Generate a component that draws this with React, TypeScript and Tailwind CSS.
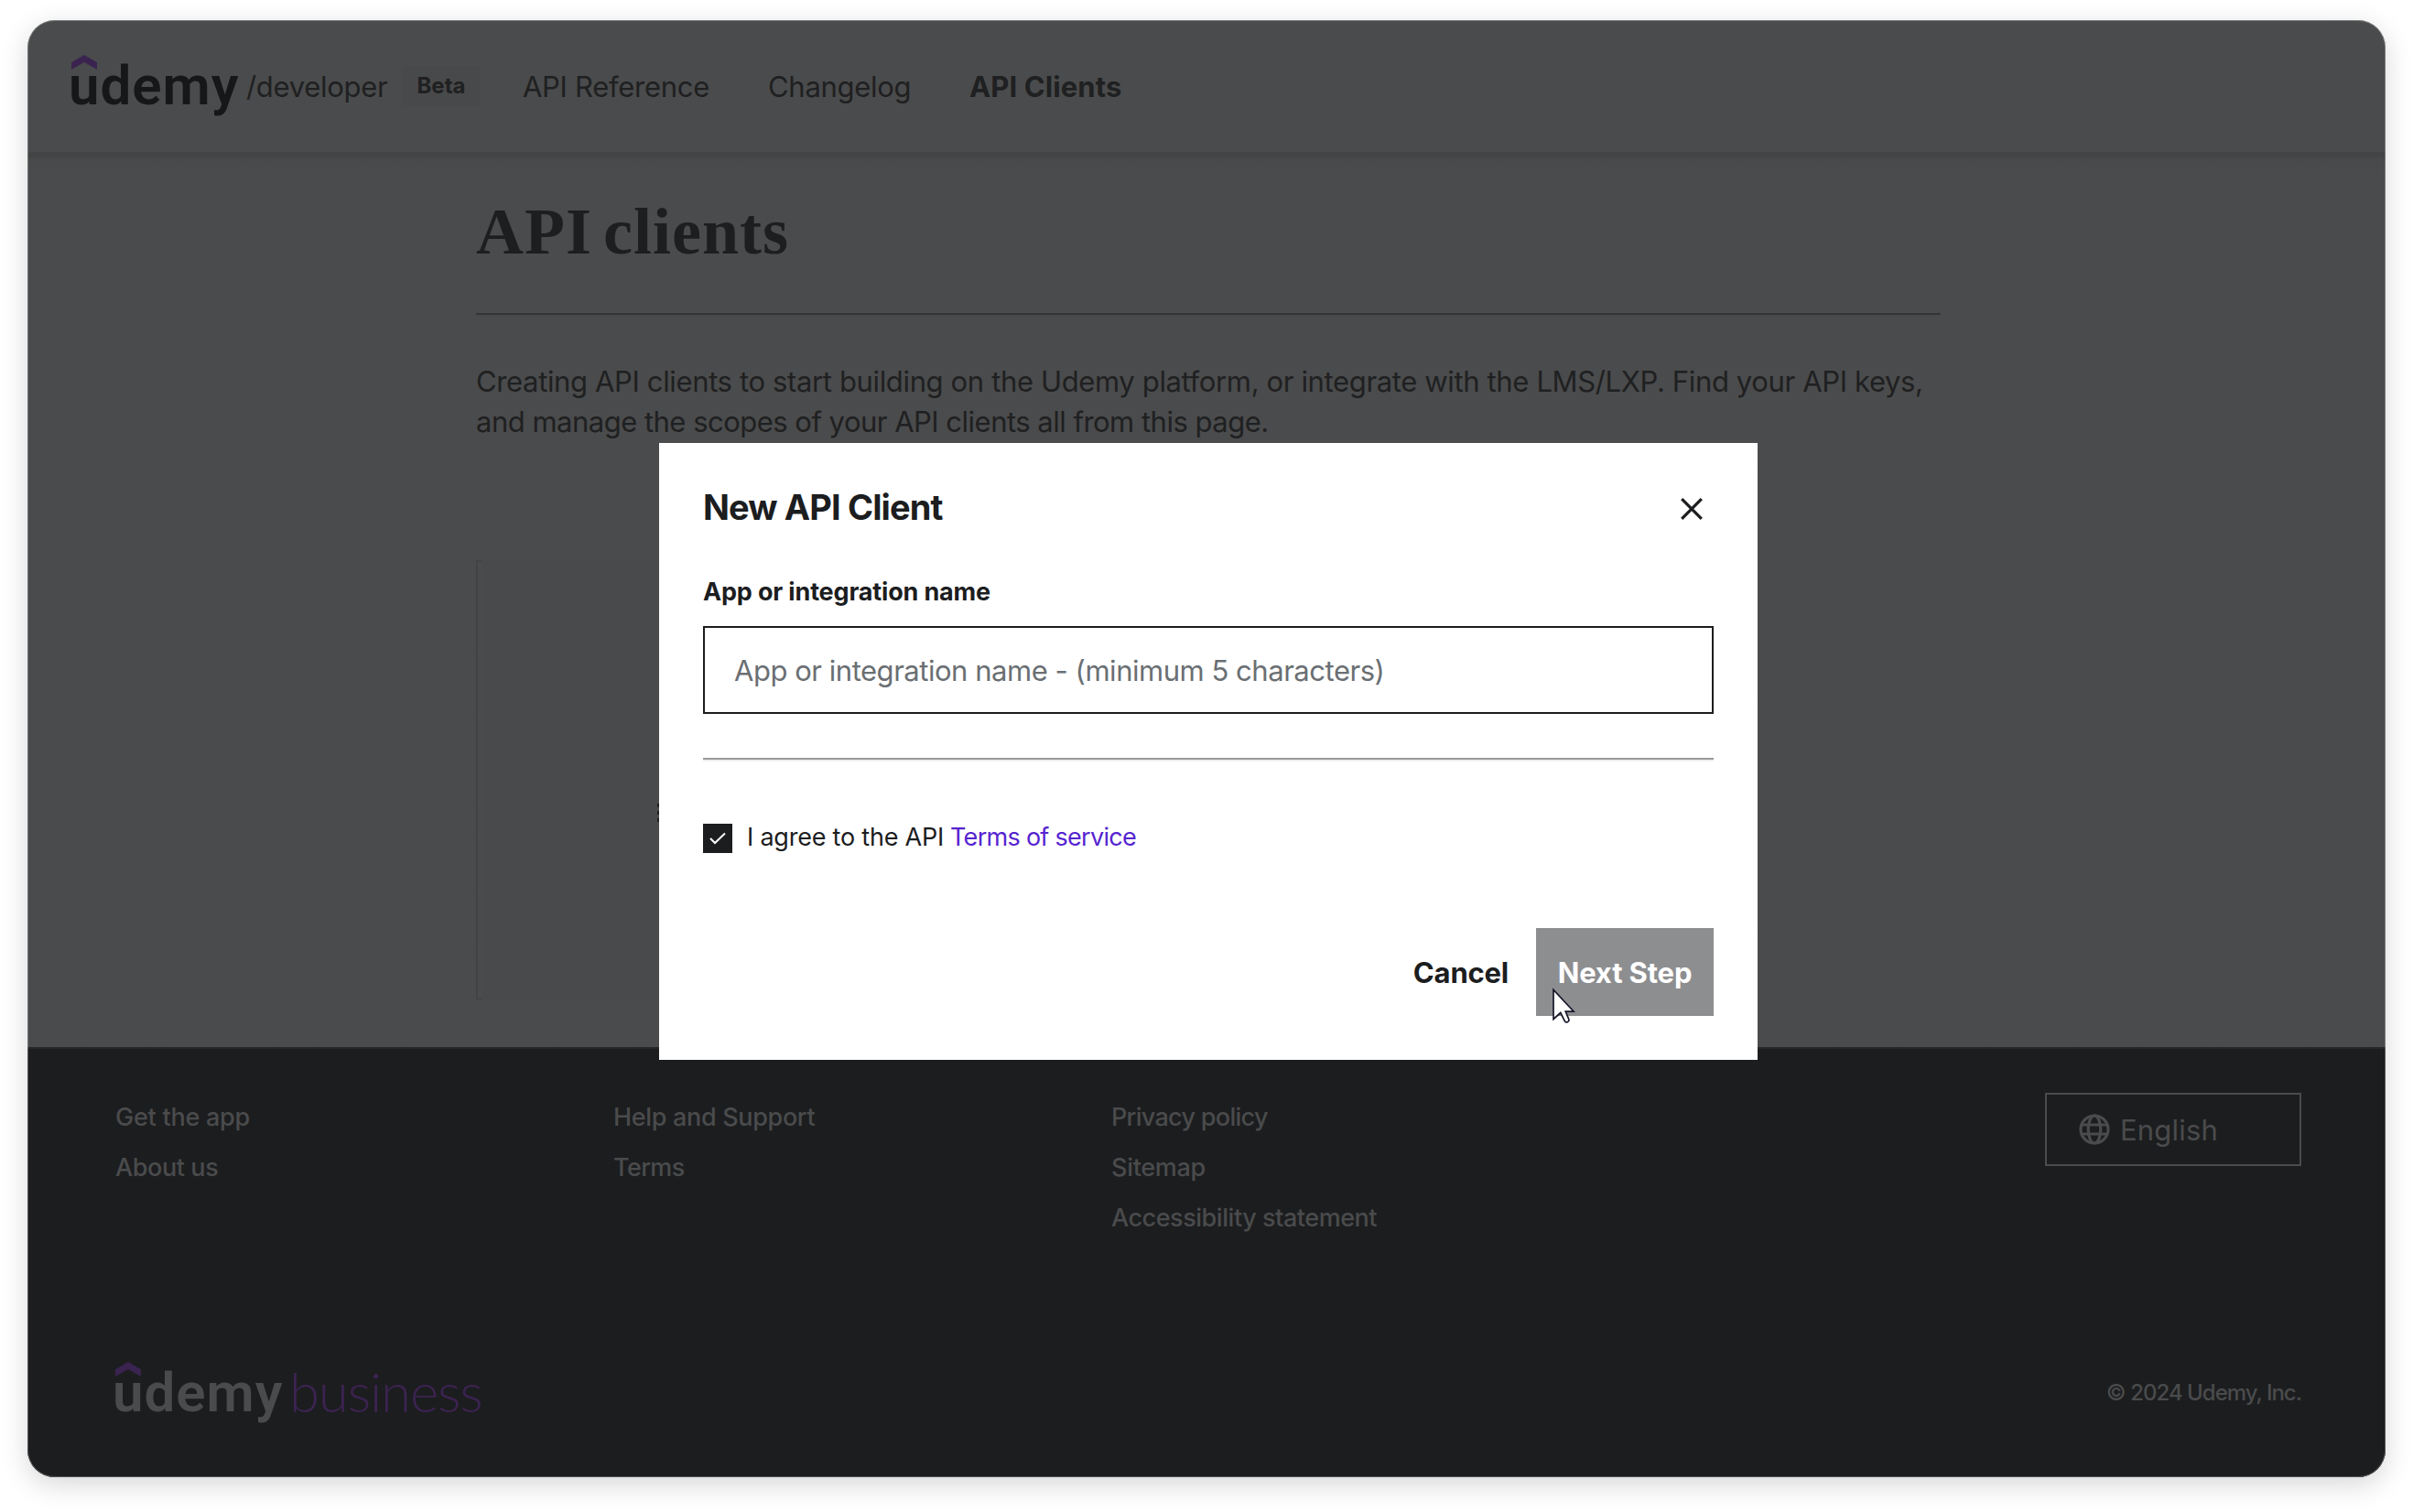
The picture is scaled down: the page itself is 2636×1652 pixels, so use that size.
import React from 'react';

function Caret() {
  return (
    <svg className="absolute left-[3px] top-[-4px]" width="28" height="17" viewBox="0 0 28 17" aria-hidden="true">
      <path d="M0 8.3 14 0l14 8.3V16L14 8 0 16Z" fill="#3b2350" />
    </svg>
  );
}

function Wordmark({ className }: { className: string }) {
  return (
    <div className={`relative w-[186px] shrink-0 font-['Roboto',sans-serif] text-[60px] leading-[60px] font-semibold tracking-[1px] ${className}`}>
      <Caret />
      udemy
    </div>
  );
}

function Header() {
  return (
    <header className="flex h-[144px] shrink-0 items-center pl-[45px] text-[31px] leading-[44px] text-[#1f2021]">
      <Wordmark className="text-[#161718]" />
      <span className="ml-[8px] w-[171px] pt-[2px] tracking-[-0.3px]">/developer</span>
      <span className="flex h-[44px] w-[84px] items-center justify-center bg-[#48494a] text-[24px] leading-[28px] font-bold">
        Beta
      </span>
      <nav className="ml-[47px] flex items-center pt-[2px]">
        <a className="w-[268px] tracking-[-0.29px]">API Reference</a>
        <a className="w-[220px] tracking-[-0.3px]">Changelog</a>
        <a className="font-bold tracking-[0.11px]">API Clients</a>
      </nav>
    </header>
  );
}

function Main() {
  return (
    <main className="h-[978px] shrink-0 bg-linear-to-b from-[#434445] from-[5px] via-[#48494a] via-[8px] to-[#4a4b4c] to-[24px] text-[#1f2021]">
      <div className="mx-[490px] w-[1600px] pt-[47px]">
        <h1 className="font-['Liberation_Serif',serif] text-[72px] leading-[80px] font-bold tracking-[1px] [word-spacing:-7px] text-[#1d1e1f]">
          API clients
        </h1>
        <div className="mt-[49px] h-[4px] border-t-2 border-b-2 border-t-[#343536] border-b-[#474849]" />
        <p className="mt-[49px] text-[31px] leading-[44px] whitespace-nowrap">
          <span className="block tracking-[-0.36px]">
            Creating API clients to start building on the Udemy platform, or integrate with the LMS/LXP. Find your API keys,
          </span>
          <span className="block tracking-[-0.51px]">and manage the scopes of your API clients all from this page.</span>
        </p>
        <div className="mt-[129px] flex h-[480px]">
          <div className="w-[6px] border-y-2 border-l-2 border-[#424344]" />
          <div className="w-[192px] bg-[#494a4b]" />
          <div className="flex flex-col gap-[4px] pt-[266px]">
            <i className="h-[4px] w-[4px] bg-[#1f2021]" />
            <i className="h-[4px] w-[4px] bg-[#1f2021]" />
            <i className="h-[4px] w-[4px] bg-[#1f2021]" />
          </div>
        </div>
      </div>
    </main>
  );
}

function Globe() {
  return (
    <svg width="34" height="34" viewBox="0 0 34 34" fill="none" stroke="#4a4b4c" strokeWidth="3.2" aria-hidden="true">
      <circle cx="17" cy="17" r="15" />
      <ellipse cx="17" cy="17" rx="6.8" ry="15" />
      <path d="M3 12h28M3 22h28" />
    </svg>
  );
}

function Footer() {
  return (
    <footer className="flex h-[470px] shrink-0 flex-col border-t-2 border-[#262728] bg-[#1c1d1f] pr-[92px] pl-[96px] text-[#4a4b4c]">
      <div className="flex pt-[59px] text-[27px] leading-[32px] font-medium">
        <ul className="flex w-[544px] flex-col gap-[23px]">
          <li className="tracking-[-0.25px]">Get the app</li>
          <li className="tracking-[-0.4px]">About us</li>
        </ul>
        <ul className="flex w-[544px] flex-col gap-[23px]">
          <li className="tracking-[-0.33px]">Help and Support</li>
          <li className="tracking-[-0.6px]">Terms</li>
        </ul>
        <ul className="flex w-[544px] flex-col gap-[23px]">
          <li className="tracking-[-0.7px]">Privacy policy</li>
          <li className="tracking-[-0.3px]">Sitemap</li>
          <li className="tracking-[-0.46px]">Accessibility statement</li>
        </ul>
        <button className="mt-[-11px] ml-auto flex h-[80px] w-[280px] items-center border-2 border-[#4a4b4c] pl-[35px] text-[31px] leading-[44px] font-normal tracking-[0.2px]">
          <Globe />
          <span className="ml-[11px] pt-[2px]">English</span>
        </button>
      </div>
      <div className="mt-auto flex items-center pb-[62px]">
        <div className="flex">
          <Wordmark className="ml-[-3px] text-[#4a4b4c]" />
          <span className="mt-[-2px] ml-[7px] font-['Lato',sans-serif] text-[60px] leading-[60px] font-light tracking-[-1.2px] text-[#3b2350]">
            business
          </span>
        </div>
        <span className="ml-auto text-[24px] leading-[32px] font-medium tracking-[-1px]">© 2024 Udemy, Inc.</span>
      </div>
    </footer>
  );
}

function Cursor() {
  return (
    <svg className="absolute top-[595px] left-[975px]" width="26" height="40" viewBox="0 0 26 40" aria-hidden="true">
      <path
        d="M2 2.5V34.5L9.8 27.5 14.2 36.4C15 38 16.4 38 17.6 37.4 19.2 36.6 19.3 35.6 18.7 34.3L15.2 26.2H24.2Z"
        fill="#fff"
        stroke="#17172b"
        strokeWidth="1.7"
      />
    </svg>
  );
}

function Modal() {
  return (
    <section className="absolute top-[462px] left-[690px] flex h-[674px] w-[1200px] flex-col bg-white p-[48px] text-[#1c1d1f]">
      <div className="flex h-[44px] items-center justify-between">
        <h2 className="text-[38px] leading-[44px] font-bold tracking-[-0.89px]">New API Client</h2>
        <svg className="mt-[4px] mr-[12px]" width="24" height="24" viewBox="0 0 24 24" stroke="#1c1d1f" strokeWidth="3.2" aria-hidden="true">
          <path d="M1.2 1.2l21.6 21.6M22.8 1.2L1.2 22.8" />
        </svg>
      </div>
      <label className="mt-[55px] text-[27px] leading-[32px] font-bold tracking-[-0.17px]">App or integration name</label>
      <input
        className="mt-[21px] h-[96px] w-full shrink-0 border-2 border-[#1c1d1f] px-[32px] text-[31px] tracking-[-0.47px] placeholder:text-[#6a6f73]"
        placeholder="App or integration name - (minimum 5 characters)"
      />
      <div className="mt-[48px] h-[4px] shrink-0 border-t-2 border-b-2 border-t-[#9a9a9a] border-b-[#eeeeee]" />
      <div className="mt-[68px] flex h-[32px] items-center">
        <span className="flex h-[32px] w-[32px] items-center justify-center bg-[#1c1d1f]">
          <svg width="18" height="14" viewBox="0 0 18 14" fill="none" stroke="#fff" strokeWidth="2" aria-hidden="true">
            <path d="M1 7l5 5L17 1.5" />
          </svg>
        </span>
        <span className="ml-[16px] pb-[3px] text-[27px] leading-[32px] whitespace-pre">
          <span className="inline-block w-[222px] tracking-[-0.22px]">I agree to the API</span>
          <a className="tracking-[-0.71px] text-[#5624d0]">Terms of service</a>
        </span>
      </div>
      <div className="mt-[82px] flex h-[96px] items-center justify-end text-[31px] leading-[44px] font-bold">
        <button className="mr-[30px] pt-[2px] tracking-[-0.2px]">Cancel</button>
        <button className="h-[96px] w-[194px] bg-[#8d8e90] pt-[2px] text-white tracking-[-0.15px]">Next Step</button>
      </div>
      <Cursor />
    </section>
  );
}

export default function App() {
  return (
    <div className="h-[1652px] w-[2636px] bg-white pt-[22px] pl-[30px] font-['Inter',sans-serif]">
      <div className="relative flex h-[1592px] w-[2576px] flex-col overflow-hidden rounded-[30px] bg-[#4a4b4c] shadow-[0_8px_30px_rgba(0,0,0,0.16)]">
        <Header />
        <Main />
        <Footer />
        <div className="pointer-events-none absolute inset-0 rounded-[30px] border border-white/25" />
        <Modal />
      </div>
    </div>
  );
}
